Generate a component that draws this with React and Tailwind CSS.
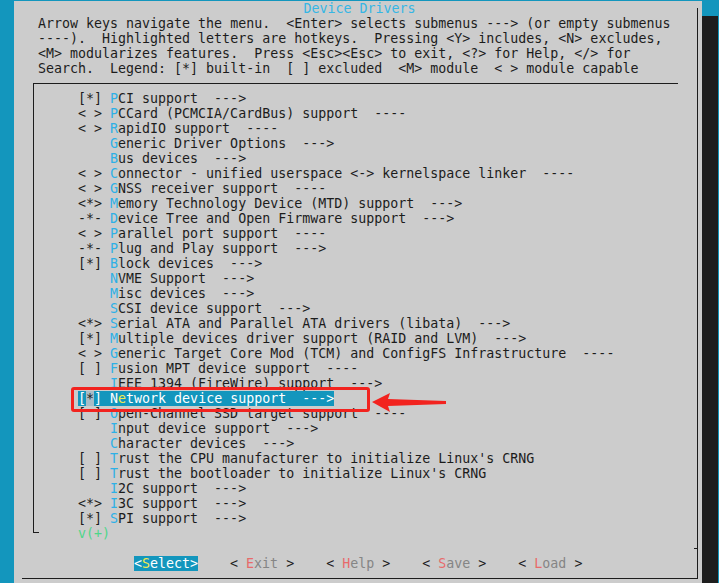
import React from 'react'

const help = [
  'Arrow keys navigate the menu.  <Enter> selects submenus ---> (or empty submenus',
  '----).  Highlighted letters are hotkeys.  Pressing <Y> includes, <N> excludes,',
  '<M> modularizes features.  Press <Esc><Esc> to exit, <?> for Help, </> for',
  'Search.  Legend: [*] built-in  [ ] excluded  <M> module  < > module capable',
]

const items = [
  ['[*] ', 'PCI support  --->'],
  ['< > ', 'PCCard (PCMCIA/CardBus) support  ----'],
  ['< > ', 'RapidIO support  ----'],
  ['    ', 'Generic Driver Options  --->'],
  ['    ', 'Bus devices  --->'],
  ['< > ', 'Connector - unified userspace <-> kernelspace linker  ----'],
  ['< > ', 'GNSS receiver support  ----'],
  ['<*> ', 'Memory Technology Device (MTD) support  --->'],
  ['-*- ', 'Device Tree and Open Firmware support  --->'],
  ['< > ', 'Parallel port support  ----'],
  ['-*- ', 'Plug and Play support  --->'],
  ['[*] ', 'Block devices  --->'],
  ['    ', 'NVME Support  --->'],
  ['    ', 'Misc devices  --->'],
  ['    ', 'SCSI device support  --->'],
  ['<*> ', 'Serial ATA and Parallel ATA drivers (libata)  --->'],
  ['[*] ', 'Multiple devices driver support (RAID and LVM)  --->'],
  ['< > ', 'Generic Target Core Mod (TCM) and ConfigFS Infrastructure  ----'],
  ['[ ] ', 'Fusion MPT device support  ----'],
  ['    ', 'IEEE 1394 (FireWire) support  --->'],
  ['[*] ', 'Network device support  --->', true],
  ['[ ] ', 'Open-Channel SSD target support  ----'],
  ['    ', 'Input device support  --->'],
  ['    ', 'Character devices  --->'],
  ['[ ] ', "Trust the CPU manufacturer to initialize Linux's CRNG"],
  ['[ ] ', "Trust the bootloader to initialize Linux's CRNG"],
  ['    ', 'I2C support  --->'],
  ['<*> ', 'I3C support  --->'],
  ['[*] ', 'SPI support  --->'],
]

const buttons = ['Exit', 'Help', 'Save', 'Load']

const MenuRow = ({ prefix, label, selected }) => {
  if (selected) {
    return (
      <div className="h-[15px]">
        <span className="bg-[#1396bd] text-white">
          [<span className="bg-[#a9bcc6] text-[#1c1c1c]">*</span>] {label[0]}
          <span className="text-[#f2e94e]">{label[1]}</span>
          {label.slice(2)}
        </span>
      </div>
    )
  }
  return (
    <div className="h-[15px]">
      {prefix}
      <span className="text-[#2eb0e6]">{label[0]}</span>
      {label.slice(1)}
    </div>
  )
}

export default function App() {
  return (
    <div className="w-[719px] h-[583px] bg-[#1396bd] flex overflow-hidden font-['DejaVu_Sans_Mono',monospace] text-[13.3px] leading-[15px] text-[#1c1c1c] whitespace-pre">
      <div className="w-[14px] shrink-0" />

      <div className="w-[688px] shrink-0 mt-[1px] bg-[#cccccc] pt-[7px] pl-[8px] pr-[4px] relative">
        <div className="h-[571px] border-r border-b border-[#1c1c1c] flex flex-col">
          <div className="h-[15px] -mt-[7px] text-center text-[#36b6e4]">Device Drivers</div>
          <div className="pl-[16px]">
            {help.map((l) => (
              <div key={l} className="h-[15px]">{l}</div>
            ))}
          </div>

          <div className="mt-[7px] ml-[11px] w-[645px] border-t border-l border-[#1c1c1c] pt-[7px] pl-[44px] pb-[7px] relative">
            {items.map(([p, t, s]) => (
              <MenuRow key={t} prefix={p} label={t} selected={s} />
            ))}
            <div className="absolute left-0 bottom-0 w-[5px] h-px bg-[#1c1c1c]" />
          </div>
          <div className="h-[15px] -mt-[7px] pl-[56px] text-[#4fd68a]">v(+)</div>

          <div className="h-[15px] flex items-center justify-end">
            <div className="w-[3px] h-px bg-[#1c1c1c]" />
          </div>

          <div className="h-[15px] pl-[112px] flex">
            <span className="bg-[#1396bd] text-white">
              {'<'}<span className="text-[#f2e94e]">S</span>elect{'>'}
            </span>
            {buttons.map((b) => (
              <span key={b} className="ml-[32px]">
                {'< '}
                <span className="text-[#e86a6a]">{b[0]}</span>
                <span className="text-[#858585]">{b.slice(1)}</span>
                {' >'}
              </span>
            ))}
          </div>
        </div>

        {/* red annotation */}
        <div className="absolute left-[57px] top-[386px] w-[299px] h-[25px] border-[3px] border-[#f2231f] rounded-[3px]" />
        <svg className="absolute left-[356px] top-[388px]" width="80" height="26" viewBox="0 0 80 26">
          <polygon points="2,13 20,4 18,10 76,12 76,15 18,17 20,23" fill="#f2231f" />
        </svg>
      </div>

      <div className="w-[17px] shrink-0 flex flex-col">
        <div className="h-[16px]" />
        <div className="flex-1 bg-[#1e1e1e] border-r border-[#1396bd]" />
      </div>
    </div>
  )
}
